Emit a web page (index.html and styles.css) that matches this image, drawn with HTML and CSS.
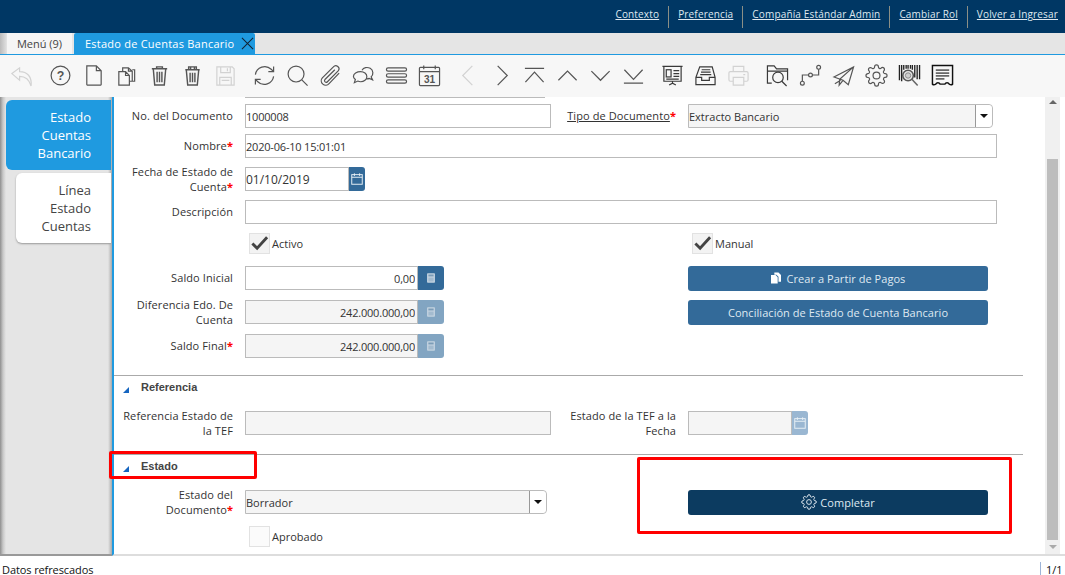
FILE: index.html
```html
<!DOCTYPE html>
<html lang="es">
<head>
<meta charset="utf-8">
<title>Estado de Cuentas Bancario</title>
<link rel="stylesheet" href="styles.css">
</head>
<body>
<svg class="defs" width="0" height="0" aria-hidden="true">
  <symbol id="gear" viewBox="0 0 24 24"><circle cx="12" cy="12" r="3.6"/><path d="M19.4 15a1.65 1.65 0 0 0 .33 1.82l.06.06a2 2 0 0 1 0 2.83 2 2 0 0 1-2.83 0l-.06-.06a1.65 1.65 0 0 0-1.82-.33 1.65 1.65 0 0 0-1 1.51V21a2 2 0 0 1-2 2 2 2 0 0 1-2-2v-.09A1.65 1.65 0 0 0 9 19.4a1.65 1.65 0 0 0-1.82.33l-.06.06a2 2 0 0 1-2.83 0 2 2 0 0 1 0-2.83l.06-.06a1.65 1.65 0 0 0 .33-1.82 1.65 1.65 0 0 0-1.51-1H3a2 2 0 0 1-2-2 2 2 0 0 1 2-2h.09A1.65 1.65 0 0 0 4.6 9a1.65 1.65 0 0 0-.33-1.82l-.06-.06a2 2 0 0 1 0-2.83 2 2 0 0 1 2.83 0l.06.06a1.65 1.65 0 0 0 1.82.33H9a1.65 1.65 0 0 0 1-1.51V3a2 2 0 0 1 2-2 2 2 0 0 1 2 2v.09a1.65 1.65 0 0 0 1 1.51 1.65 1.65 0 0 0 1.82-.33l.06-.06a2 2 0 0 1 2.83 0 2 2 0 0 1 0 2.83l-.06.06a1.65 1.65 0 0 0-.33 1.82V9a1.65 1.65 0 0 0 1.51 1H21a2 2 0 0 1 2 2 2 2 0 0 1-2 2h-.09a1.65 1.65 0 0 0-1.51 1z"/></symbol>
  <symbol id="cal" viewBox="0 0 16 16"><rect x="2" y="3" width="12" height="11"/><path d="M2 6h12M5 1.5v3M11 1.5v3"/></symbol>
  <symbol id="calc" viewBox="0 0 16 16"><rect class="solid" x="3.500" y="2.500" width="9" height="11" rx=".8"/><rect class="hole" x="5" y="4" width="6" height="2.200"/><rect class="hole-low" x="5" y="7.500" width="6" height="4.500"/></symbol>
</svg>

<header class="topbar">
  <nav class="toplinks">
    <a href="#">Contexto</a><a href="#">Preferencia</a><a href="#">Compañía Estándar Admin</a><a href="#">Cambiar Rol</a><a href="#">Volver a Ingresar</a>
  </nav>
</header>

<div class="tabbar">
  <div class="tab">Menú (9)</div>
  <div class="tab tab-active">Estado de Cuentas Bancario
    <svg class="tab-x" viewBox="0 0 14 14"><path d="M1 1l12 12M13 1L1 13"/></svg>
  </div>
</div>

<div class="toolbar">
  <span class="tool"><svg class="ic off" viewBox="0 0 24 24"><path d="M2 10l8-6v4c8 0 13 5 12 15-2-7-6-10-12-10v4z"/></svg></span>
  <span class="tool group"><svg class="ic" viewBox="0 0 24 24"><circle cx="12" cy="12" r="9.8"/><text class="ic-text" x="12" y="16.500" font-size="13">?</text></svg></span>
  <span class="tool"><svg class="ic" viewBox="0 0 24 24"><path d="M5 2h10l5 5v14.500a.5.5 0 0 1-.5.5h-14a.5.500 0 0 1-.5-.5zM15 2v5h5"/></svg></span>
  <span class="tool"><svg class="ic" viewBox="0 0 24 24"><path d="M4 8h7l4 4v10H4zM11 8v4h4M8 8V4h6l4 3.500V18h-3M14 4v3.500h4M18 6h2.500v12H18"/></svg></span>
  <span class="tool"><svg class="ic thick" viewBox="0 0 24 24"><path d="M4 5h16M9 5V3h6v2M5.500 5l1.500 17h10l1.500-17M9.500 8v11M12 8v11M14.500 8v11"/></svg></span>
  <span class="tool"><svg class="ic thick" viewBox="0 0 24 24"><path d="M4.500 6h15M8 6V3h8v3M10 3v3M14 3v3M5.500 6l1.500 16h10l1.500-16M9.500 9v10M12 9v10M14.500 9v10"/></svg></span>
  <span class="tool"><svg class="ic off" viewBox="0 0 24 24"><path d="M3 3h16l2 2v17H3zM7 3v6h10V3M14 4.500v3M6 22v-8h12v8M8 17h8"/></svg></span>
  <span class="tool group"><svg class="ic" viewBox="0 0 24 24"><path d="M2.500 11A9.800 9.800 0 0 1 19 5.500l2 2M21.500 13A9.800 9.800 0 0 1 5 18.500l-2-2M21.500 2.500v5.500H16M2.500 21.500V16H8"/></svg></span>
  <span class="tool"><svg class="ic" viewBox="0 0 24 24"><circle cx="10.500" cy="10.500" r="8.300"/><path d="M16.500 16.500l6 6"/></svg></span>
  <span class="tool"><svg class="ic" viewBox="0 0 24 24"><path d="M21 9.500L10.500 20.500a4.500 4.500 0 0 1-7-6L15 3a3.200 3.200 0 0 1 5 4.200L8.800 18.500a1.700 1.700 0 0 1-2.600-2.300L16.500 6"/></svg></span>
  <span class="tool"><svg class="ic" viewBox="0 0 24 24"><path d="M10.500 6.500C12 3.500 16 3 19 4.500c3.500 2 3.500 6.500 1 9l1.500 3-3.500-1.500c-1 .5-2 .6-3 .5"/><path d="M9 8c3.500 0 6.500 2.200 6.500 5.200S12.500 18.500 9 18.500c-1 0-2-.2-3-.7L2.500 19.500l1-3.300C2 15 1.500 14 1.500 13 1.500 10.200 5 8 9 8z"/></svg></span>
  <span class="tool"><svg class="ic" viewBox="0 0 24 24"><rect x="1.500" y="4" width="21" height="3.500" rx="1.700"/><rect x="1.500" y="10.200" width="21" height="3.500" rx="1.700"/><rect x="1.500" y="16.500" width="21" height="3.500" rx="1.700"/></svg></span>
  <span class="tool"><svg class="ic" viewBox="0 0 24 24"><rect x="1.500" y="3.500" width="21" height="19" rx="1"/><path d="M1.500 8h21M6 1.500v4M18 1.500v4"/><text class="ic-text" x="12" y="20" font-size="10.500">31</text></svg></span>
  <span class="tool group"><svg class="ic off" viewBox="0 0 24 24"><path d="M16 2L6 12l10 10"/></svg></span>
  <span class="tool"><svg class="ic" viewBox="0 0 24 24"><path d="M8 2l10 10L8 22"/></svg></span>
  <span class="tool"><svg class="ic" viewBox="0 0 24 24"><path d="M2 4.500h20M2.500 19L12 8.500 21.500 19"/></svg></span>
  <span class="tool"><svg class="ic" viewBox="0 0 24 24"><path d="M2.500 17L12 7.500l9.500 9.500"/></svg></span>
  <span class="tool"><svg class="ic" viewBox="0 0 24 24"><path d="M2.500 7.500L12 17l9.500-9.500"/></svg></span>
  <span class="tool"><svg class="ic" viewBox="0 0 24 24"><path d="M2.500 6L12 16l9.500-10M2 20h20"/></svg></span>
  <span class="tool group"><svg class="ic dark" viewBox="0 0 24 24"><path d="M1.500 2.500h21M3 2.500V18h18V2.500M12 18v2M8.500 22l3.500-2 3.500 2"/><rect x="5.500" y="6" width="5" height="7.500"/><path d="M13 7h6M13 10h6M13 13h6M5.500 15.800h13"/></svg></span>
  <span class="tool"><svg class="ic dark" viewBox="0 0 24 24"><path d="M6 3h13l3 11v7.500H2V14zM2 14h6v3h8v-3h6M8 6h9M7.300 8.500h10M6.500 11h11.500"/></svg></span>
  <span class="tool"><svg class="ic off" viewBox="0 0 24 24"><path d="M6.500 8V2.500h11V8M6.500 18H3.500a1.500 1.500 0 0 1-1.500-1.500V9.500A1.500 1.500 0 0 1 3.500 8h17A1.500 1.500 0 0 1 22 9.500v7a1.500 1.500 0 0 1-1.500 1.500h-3M6.500 14h11v8h-11zM17 11h2"/></svg></span>
  <span class="tool group"><svg class="ic dark" viewBox="0 0 24 24"><path d="M6 20H1.500V2h7l2.500 3h11.500v12M1.500 7.500h21"/><circle cx="12.500" cy="14" r="5.500"/><path d="M16.500 18l5 5"/></svg></span>
  <span class="tool"><svg class="ic" viewBox="0 0 24 24"><circle cx="3.500" cy="20" r="2"/><circle cx="12" cy="11.500" r="2"/><circle cx="20.500" cy="3.500" r="2"/><path d="M3.500 18v-6.500H10M14 11.500h6.500V5.500"/></svg></span>
  <span class="tool"><svg class="ic" viewBox="0 0 24 24"><path d="M2 13.500L22.500 3 17 21.500l-5.500-4.500zM22.500 3L8 16l-.5 6 4-5M9 17l-6 3.500"/></svg></span>
  <span class="tool"><svg class="ic" viewBox="0 0 24 24"><use href="#gear"/></svg></span>
  <span class="tool"><svg class="ic barcode" viewBox="0 0 24 24"><path d="M1.500 1v16M3.800 1v17M6 1v5M8.500 1v4M10.500 1v4M13 1v4M15 1v5M17.500 1v13M20 1v15M22.500 1v15"/><circle class="lens" cx="10.500" cy="12" r="5.500"/><circle class="lens-in" cx="10.500" cy="12" r="2.800"/><path class="handle" d="M14.500 16l6 6.500"/></svg></span>
  <span class="tool"><svg class="ic receipt" viewBox="0 0 24 24"><path class="receipt-edge" d="M1.500 1.500h21v19.500c-1 1-2 1-3.500 0a2.500 2.500 0 0 0-4.500 0h-5a2.500 2.500 0 0 0-4.500 0c-1.500 1-2.500 1-3.500 0z"/><path class="receipt-lines" d="M5 6.500h14M5 9.500h14M5 12.500h14M5 15.500h9"/></svg></span>
</div>

<main class="workspace">
  <aside class="sidetabs">
    <div class="sidetab sidetab-active">Estado Cuentas Bancario</div>
    <div class="sidetab">Línea Estado Cuentas</div>
  </aside>

  <section class="content">
    <div class="form-scroll">
      <div class="cut-field"></div>

      <div class="fields fields-main">
        <label class="lbl">No. del Documento</label>
        <input class="inp" value="1000008">
        <label class="lbl"><u>Tipo de Documento</u><i>*</i></label>
        <div class="select"><span>Extracto Bancario</span><b class="caret"></b></div>

        <label class="lbl">Nombre<i>*</i></label>
        <input class="inp span3" value="2020-06-10 15:01:01">

        <label class="lbl lbl2">Fecha de Estado de Cuenta<i>*</i></label>
        <div class="combo">
          <input class="inp inp-date" value="01/10/2019">
          <span class="addon addon-date"><svg class="cal" viewBox="0 0 16 16"><use href="#cal"/></svg></span>
        </div>
        <span></span><span></span>

        <label class="lbl">Descripción</label>
        <input class="inp span3">

        <span></span>
        <div class="check"><span class="box"><svg viewBox="0 0 20 20"><path d="M2.500 10l5 5L18 3.500"/></svg></span>Activo</div>
        <span></span>
        <div class="check"><span class="box"><svg viewBox="0 0 20 20"><path d="M2.500 10l5 5L18 3.500"/></svg></span>Manual</div>

        <label class="lbl">Saldo Inicial</label>
        <div class="combo combo-num">
          <input class="inp num" value="0,00">
          <span class="addon"><svg class="calc" viewBox="0 0 16 16"><use href="#calc"/></svg></span>
        </div>
        <span></span>
        <button class="btn"><svg class="btn-doc" viewBox="0 0 12 13"><path d="M4 0h5l3 3v8H9V5L6.500 2.500H4zM0 3h5.500L8 5.500V13H0z"/></svg>Crear a Partir de Pagos</button>

        <label class="lbl lbl2">Diferencia Edo. De Cuenta</label>
        <div class="combo combo-num">
          <input class="inp num ro" value="242.000.000,00" readonly>
          <span class="addon addon-off"><svg class="calc" viewBox="0 0 16 16"><use href="#calc"/></svg></span>
        </div>
        <span></span>
        <button class="btn">Conciliación de Estado de Cuenta Bancario</button>

        <label class="lbl">Saldo Final<i>*</i></label>
        <div class="combo combo-num">
          <input class="inp num ro" value="242.000.000,00" readonly>
          <span class="addon addon-off"><svg class="calc" viewBox="0 0 16 16"><use href="#calc"/></svg></span>
        </div>
      </div>

      <div class="group-head group-ref"><span class="tri"></span>Referencia</div>
      <div class="fields fields-ref">
        <label class="lbl lbl2">Referencia Estado de la TEF</label>
        <input class="inp ro">
        <label class="lbl lbl2">Estado de la TEF a la Fecha</label>
        <div class="combo">
          <input class="inp inp-date ro">
          <span class="addon addon-date addon-date-off"><svg class="cal" viewBox="0 0 16 16"><use href="#cal"/></svg></span>
        </div>
      </div>

      <div class="group-head group-est"><span class="tri"></span>Estado</div>
      <div class="fields fields-est">
        <label class="lbl lbl2">Estado del Documento<i>*</i></label>
        <div class="select select-state"><span>Borrador</span><b class="caret"></b></div>
        <span></span>
        <button class="btn btn-dark"><svg class="btn-gear" viewBox="0 0 24 24"><use href="#gear"/></svg>Completar</button>
        <span></span>
        <div class="check"><span class="box box-empty"></span>Aprobado</div>
      </div>
    </div>
    <div class="scrollbar">
      <span class="arrow arrow-up"></span>
      <span class="thumb"></span>
      <span class="arrow arrow-down"></span>
    </div>
    <span class="mark mark-estado"></span>
    <span class="mark mark-completar"></span>
  </section>
</main>

<footer class="status">
  <span class="status-text">Datos refrescados</span>
  <span class="status-page">1/1</span>
</footer>
</body>
</html>
```
FILE: styles.css
```css
* { box-sizing: border-box; }
html, body { margin: 0; height: 575px; overflow: hidden; }
body {
  width: 1065px;
  display: flex;
  flex-direction: column;
  background: #fff;
  color: #333;
  font: 11px/15px "Open Sans", "Noto Sans", sans-serif;
}
.defs { position: absolute; }

/* top bar */
.topbar {
  height: 33px;
  background: #003764;
  display: flex;
  justify-content: flex-end;
  align-items: flex-start;
  padding: 6px 0 0;
  flex: none;
}
.toplinks { display: flex; }
.toplinks a {
  height: 22px;
  padding: 1px 9px 0;
  color: #dfe8f0;
  font-size: 10px;
  letter-spacing: .16px;
  line-height: 14px;
  text-decoration: underline;
  border-left: 1px solid #8b8f86;
}
.toplinks a:first-child { border-left: 0; }
.toplinks a:last-child { padding-right: 7px; }

/* document tabs */
.tabbar {
  height: 22px;
  flex: none;
  display: flex;
  background: linear-gradient(90deg, #bbb 0, #ddd 6px, #e5e5e5 7px);
  border-bottom: 1px solid #1f9ae0;
  padding-left: 7px;
}
.tab {
  width: 65px;
  height: 21px;
  background: #f5f5f5;
  color: #444;
  line-height: 22px;
  text-align: center;
}
.tab-active {
  width: 181px;
  margin-left: 2px;
  background: #1f9ae0;
  color: #fff;
  font-weight: 500;
  letter-spacing: .23px;
  padding-left: 11px;
  text-align: left;
  position: relative;
  border-radius: 2px 2px 0 0;
}
.tab-x {
  position: absolute;
  right: 1px;
  top: 4px;
  width: 13px;
  height: 13px;
  fill: none;
  stroke: #123;
  stroke-width: 1.1;
}

/* toolbar */
.toolbar {
  height: 42px;
  flex: none;
  background: #f7f7f7;
  display: flex;
  align-items: center;
  padding-left: 5px;
}
.tool { width: 33px; height: 24px; display: flex; justify-content: center; }
.tool.group { margin-left: 6px; }
.ic {
  width: 23px;
  height: 23px;
  fill: none;
  stroke: #555;
  stroke-width: 1.25;
}
.ic.off { stroke: #d2d2d2; }
.ic.dark { stroke: #3a3a3a; }
.ic.thick { stroke-width: 1.5; }
.ic-text {
  fill: #555;
  stroke: none;
  font-family: "Liberation Sans", sans-serif;
  font-weight: 700;
  text-anchor: middle;
}
.barcode { stroke: #222; stroke-width: 1.4; }
.barcode .lens { fill: #e4e4e4; stroke: #555; stroke-width: 1.6; }
.barcode .lens-in { fill: #cfcfcf; stroke: #8a8a8a; stroke-width: 1; }
.barcode .handle { stroke: #666; stroke-width: 1.6; }
.receipt-edge { stroke: #111; stroke-width: 1.5; }
.receipt-lines { stroke: #666; stroke-width: 1.8; }

/* workspace */
.workspace { flex: 1; min-height: 0; display: flex; }
.sidetabs {
  width: 112px;
  flex: none;
  background: linear-gradient(90deg, #8f8f8f 0, #c8c8c8 3px, #e5e5e5 6px, #e5e5e5 108px, #aaa 112px);
  padding-top: 3px;
  border-bottom: 2px solid #999;
}
.sidetab {
  width: 95px;
  height: 70px;
  margin: 3px 1px 0 16px;
  padding: 8px 20px 0 20px;
  background: #fff;
  border-radius: 6px 0 0 6px;
  box-shadow: 0 1px 2px #999;
  color: #444;
  font-size: 13px;
  line-height: 18px;
  text-align: right;
}
.sidetab-active {
  width: 105px;
  margin: 0 1px 0 6px;
  background: #1f9ae0;
  color: #fff;
  box-shadow: none;
}

.content {
  flex: 1;
  display: flex;
  position: relative;
  border-left: 2px solid #1f9ae0;
  border-bottom: 2px solid #ddd;
}
.form-scroll { width: 931px; flex: none; }
.cut-field { height: 1px; margin: 0 0 6px 131px; width: 300px; background: #bbb; }

/* form grids */
.fields {
  display: grid;
  grid-template-columns: 119px 318px 125px 321px;
  align-items: start;
}
.fields-main { grid-template-rows: 30px 33px 33px 33px 33px 34px 34px 24px; }
.fields-ref { height: 24px; }
.fields-est { grid-template-rows: 36px 24px; }

.lbl {
  padding-top: 4px;
  text-align: right;
  color: #333;
  letter-spacing: .1px;
  line-height: 15px;
}
.lbl2 { margin-top: -3px; padding-top: 0; }
.lbl i { color: #f00; font-style: normal; font-weight: 700; }

.inp {
  width: 306px;
  height: 24px;
  margin-left: 12px;
  border: 1px solid #bbb;
  background: #fff;
  padding: 0;
  color: #333;
  font: 11px "Open Sans", "Noto Sans", sans-serif;
  letter-spacing: -.2px;
  outline: 0;
  border-radius: 0;
}
.span3 { grid-column: span 3; width: 752px; }
.ro { background: #f5f5f5; }
.num { width: 173px; margin-left: 0; text-align: right; padding-right: 2px; flex: none; }

.combo { display: flex; }
.combo-num { margin-left: 12px; }
.inp-date { width: 104px; font-size: 12px; letter-spacing: 0; flex: none; }
.addon {
  width: 26px;
  height: 24px;
  background: #336a99;
  display: flex;
  align-items: center;
  justify-content: center;
  border-radius: 0 3px 3px 0;
}
.addon-off { background: #82a5c2; }
.addon-date { width: 16px; }
.addon-date-off { background: #9ab7d2; }
.cal { width: 14px; height: 14px; fill: none; stroke: #e8f0f6; stroke-width: 1.1; }
.calc { width: 14px; height: 14px; }
.solid { fill: #c4d3e0; }
.hole { fill: #7c9db8; }
.hole-low { fill: #a3bbcf; }

.select {
  width: 305px;
  height: 24px;
  margin-left: 12px;
  display: flex;
  align-items: center;
  justify-content: space-between;
  background: #f5f5f5;
  border: 1px solid #bbb;
  border-radius: 0 4px 4px 0;
  color: #333;
}
.select-state { width: 302px; }
.caret {
  width: 17px;
  height: 22px;
  background: #fff;
  border-left: 1px solid #999;
  border-radius: 0 4px 4px 0;
  position: relative;
}
.caret::after {
  content: "";
  position: absolute;
  left: 4px;
  top: 9px;
  border: 4px solid transparent;
  border-top-color: #111;
  border-bottom: 0;
}

.check { display: flex; align-items: center; gap: 2px; margin-left: 16px; height: 21px; color: #333; }
.box {
  width: 21px;
  height: 21px;
  background: #f3f3f3;
  border: 1px solid #e2e2e2;
  display: block;
}
.box svg { width: 19px; height: 19px; display: block; fill: none; stroke: #444; stroke-width: 3; }
.box-empty { background: #fbfbfb; }

.btn {
  width: 300px;
  height: 25px;
  margin-left: 12px;
  background: #336a99;
  color: #dfe9f2;
  border: 0;
  border-radius: 3px;
  font: 11px "Open Sans", "Noto Sans", sans-serif;
  letter-spacing: .05px;
  display: flex;
  align-items: center;
  justify-content: center;
  padding: 0 0 1px;
}
.btn-doc { width: 10px; height: 12px; fill: #fff; margin-right: 6px; }
.btn-dark { background: #0c3b60; grid-row: 1; grid-column: 4; }
.btn-gear { width: 16px; height: 16px; fill: none; stroke: #e6edf3; stroke-width: 1.4; margin-right: 3px; }

/* group headers */
.group-head {
  width: 909px;
  height: 36px;
  border-top: 1px solid #aaa;
  display: flex;
  align-items: flex-start;
  padding: 4px 0 0 10px;
  color: #444;
  font: 700 11px/15px "Liberation Sans", Arial, sans-serif;
}
.group-ref { margin-top: 17px; }
.group-est { margin-top: 19px; }
.tri {
  width: 0;
  height: 0;
  margin: 7px 12px 0 -1px;
  border-left: 6px solid transparent;
  border-bottom: 6px solid #1565c0;
}

/* scrollbar */
.scrollbar {
  width: 15px;
  height: 457px;
  background: #f0f0f0;
  position: relative;
  flex: none;
}
.thumb { position: absolute; left: 2px; top: 62px; width: 11px; height: 381px; background: #bdbdbd; }
.arrow { position: absolute; left: 4px; border: 4px solid transparent; }
.arrow-up { top: 3px; border-bottom-color: #666; border-top: 0; }
.arrow-down { top: 448px; border-top-color: #aaa; border-bottom: 0; }

/* annotations */
.mark { position: absolute; border: 3px solid #f00; border-radius: 2px; }
.mark-estado { left: -5px; top: 354px; width: 148px; height: 28px; }
.mark-completar { left: 523px; top: 360px; width: 375px; height: 77px; }

/* status */
.status {
  height: 19px;
  flex: none;
  display: flex;
  justify-content: space-between;
  padding: 6px 4px 0 2px;
  line-height: 15px;
  color: #111;
  background: #fff;
}
.status-text { letter-spacing: -.1px; }
.status-page { border-left: 1px solid #9db4d8; padding-left: 5px; width: 21px; }
```
